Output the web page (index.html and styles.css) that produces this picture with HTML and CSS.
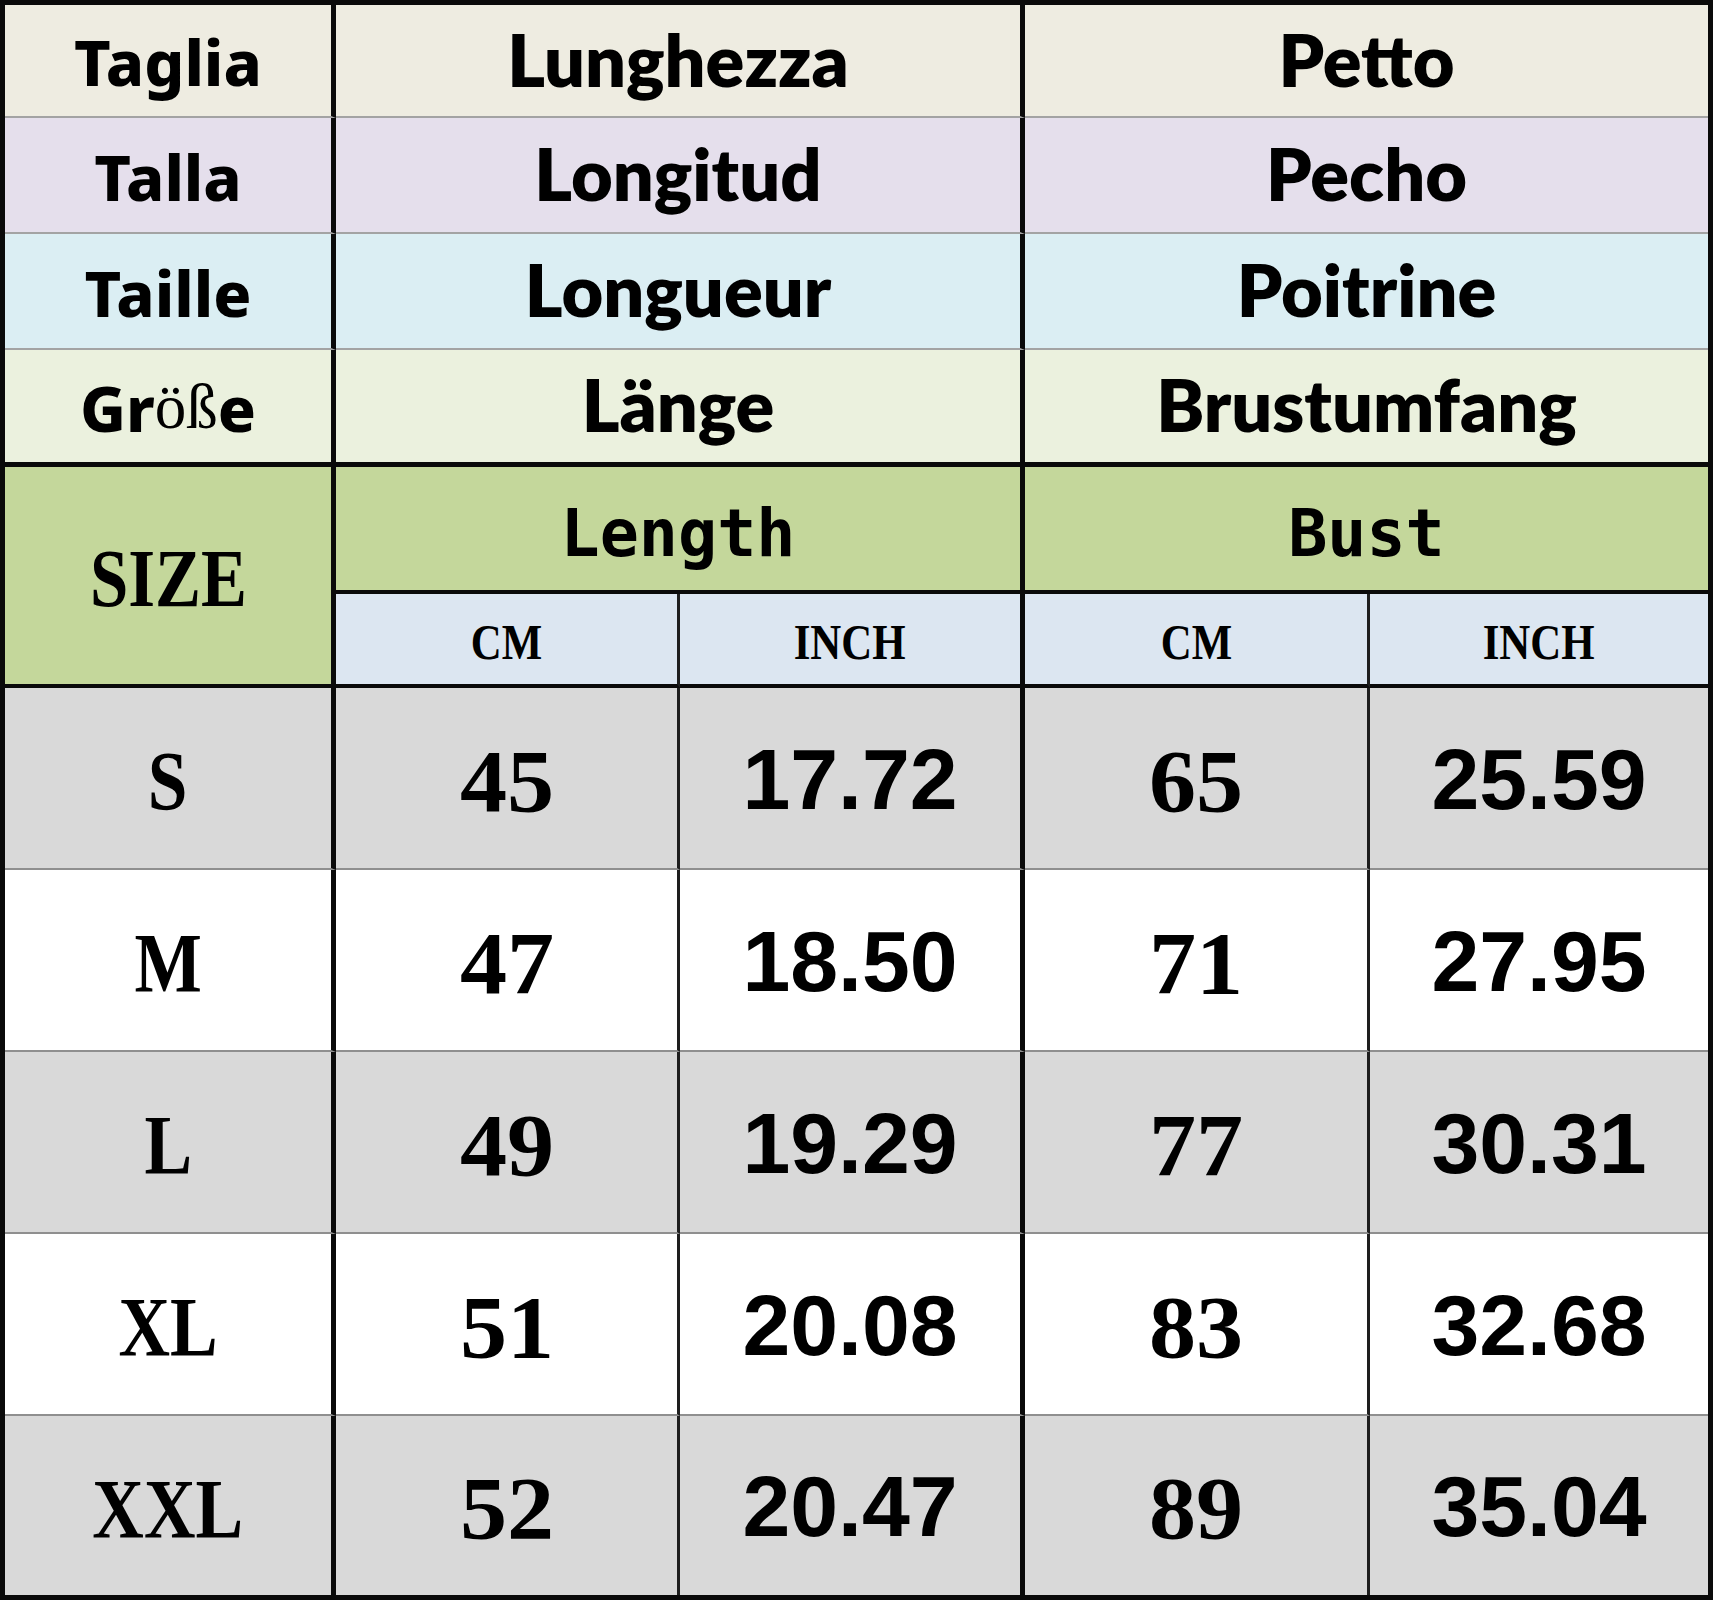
FILE: index.html
```html
<!DOCTYPE html>
<html lang="it">
<head>
<meta charset="utf-8">
<title>Size chart</title>
<link rel="stylesheet" href="styles.css">
</head>
<body>
<div class="chart">
  <div class="cell c1 hrow r-it lang">Taglia</div>
  <div class="cell span2 thick hrow r-it word">Lunghezza</div>
  <div class="cell span2 last hrow r-it word">Petto</div>

  <div class="cell c1 hrow r-es lang">Talla</div>
  <div class="cell span2 thick hrow r-es word">Longitud</div>
  <div class="cell span2 last hrow r-es word">Pecho</div>

  <div class="cell c1 hrow r-fr lang">Taille</div>
  <div class="cell span2 thick hrow r-fr word">Longueur</div>
  <div class="cell span2 last hrow r-fr word">Poitrine</div>

  <div class="cell c1 hrow-end r-de lang">Gr<span class="fallback">öß</span>e</div>
  <div class="cell span2 thick hrow-end r-de word">Länge</div>
  <div class="cell span2 last hrow-end r-de word">Brustumfang</div>

  <div class="cell c1 size-head green"><span class="cond big">SIZE</span></div>
  <div class="cell span2 thick group green mono">Length</div>
  <div class="cell span2 last group green mono">Bust</div>

  <div class="cell thin unit"><span class="cond small">CM</span></div>
  <div class="cell thick unit"><span class="cond small">INCH</span></div>
  <div class="cell thin unit"><span class="cond small">CM</span></div>
  <div class="cell last unit"><span class="cond small">INCH</span></div>

  <div class="cell c1 data grey"><span class="cond sz">S</span></div>
  <div class="cell thin data grey"><span class="serifnum">45</span></div>
  <div class="cell thick data grey sansnum">17.72</div>
  <div class="cell thin data grey"><span class="serifnum">65</span></div>
  <div class="cell last data grey sansnum">25.59</div>

  <div class="cell c1 data white"><span class="cond sz">M</span></div>
  <div class="cell thin data white"><span class="serifnum">47</span></div>
  <div class="cell thick data white sansnum">18.50</div>
  <div class="cell thin data white"><span class="serifnum">71</span></div>
  <div class="cell last data white sansnum">27.95</div>

  <div class="cell c1 data grey"><span class="cond sz">L</span></div>
  <div class="cell thin data grey"><span class="serifnum">49</span></div>
  <div class="cell thick data grey sansnum">19.29</div>
  <div class="cell thin data grey"><span class="serifnum">77</span></div>
  <div class="cell last data grey sansnum">30.31</div>

  <div class="cell c1 data white"><span class="cond sz">XL</span></div>
  <div class="cell thin data white"><span class="serifnum">51</span></div>
  <div class="cell thick data white sansnum">20.08</div>
  <div class="cell thin data white"><span class="serifnum">83</span></div>
  <div class="cell last data white sansnum">32.68</div>

  <div class="cell c1 data-end grey"><span class="cond sz">XXL</span></div>
  <div class="cell thin data-end grey"><span class="serifnum">52</span></div>
  <div class="cell thick data-end grey sansnum">20.47</div>
  <div class="cell thin data-end grey"><span class="serifnum">89</span></div>
  <div class="cell last data-end grey sansnum">35.04</div>
</div>
</body>
</html>
```

FILE: styles.css
```css
html, body {
  margin: 0;
  padding: 0;
  background: #ffffff;
}

.chart {
  box-sizing: border-box;
  width: 1713px;
  height: 1600px;
  border: 5px solid #0a0a0a;
  display: grid;
  grid-template-columns: 331px 344px 345px 345px 338px;
  grid-template-rows: 113px 116px 116px 117px 127px 94px 182px 182px 182px 182px 179px;
  color: #000;
}

.cell {
  box-sizing: border-box;
  display: flex;
  align-items: center;
  justify-content: center;
  overflow: hidden;
  white-space: nowrap;
}

.c1 { border-right: 5px solid #0a0a0a; }
.thin { border-right: 3px solid #1e1e1e; }
.thick { border-right: 5px solid #0a0a0a; }
.last { border-right: 0; }
.span2 { grid-column: span 2; }

.hrow { border-bottom: 2px solid #a3a3a3; }
.hrow-end { border-bottom: 5px solid #0a0a0a; }
.group { border-bottom: 4px solid #0a0a0a; }
.size-head { grid-row: span 2; border-bottom: 4px solid #0a0a0a; }
.unit { border-bottom: 4px solid #0a0a0a; background: #dce6f1; }
.data { border-bottom: 2px solid #8f8f8f; }
.data-end { border-bottom: 0; }

.r-it { background: #eeece1; }
.r-es { background: #e5dfec; }
.r-fr { background: #dbeef3; }
.r-de { background: #ebf1de; }
.green { background: #c4d79b; }
.grey { background: #d9d9d9; }
.white { background: #ffffff; }

.lang {
  font-family: "Noto Sans", "DejaVu Sans", sans-serif;
  font-weight: 800;
  font-size: 63px;
  padding-top: 2px;
}

.fallback {
  font-family: "Liberation Serif", serif;
  font-weight: 400;
  font-size: 63px;
}

.word {
  font-family: Lato, "Open Sans", sans-serif;
  font-weight: 800;
  font-size: 72px;
  padding-bottom: 4px;
}

.mono {
  font-family: "DejaVu Sans Mono", "Liberation Mono", monospace;
  font-weight: 700;
  font-size: 65px;
  padding-top: 10px;
}

.cond {
  display: inline-block;
  font-family: "Liberation Serif", serif;
  font-weight: 700;
  transform: scaleX(0.84);
}

.big { font-size: 82px; padding-top: 6px; }
.small { font-size: 51px; padding-top: 6px; }
.sz { font-size: 85px; padding-top: 6px; }

.serifnum {
  display: inline-block;
  font-family: "Liberation Serif", serif;
  font-weight: 700;
  font-size: 88px;
  padding-top: 6px;
  transform: scaleX(1.07);
}

.sansnum {
  font-family: "Liberation Sans", Arial, sans-serif;
  font-weight: 700;
  font-size: 86px;
  padding-top: 2px;
}
```
